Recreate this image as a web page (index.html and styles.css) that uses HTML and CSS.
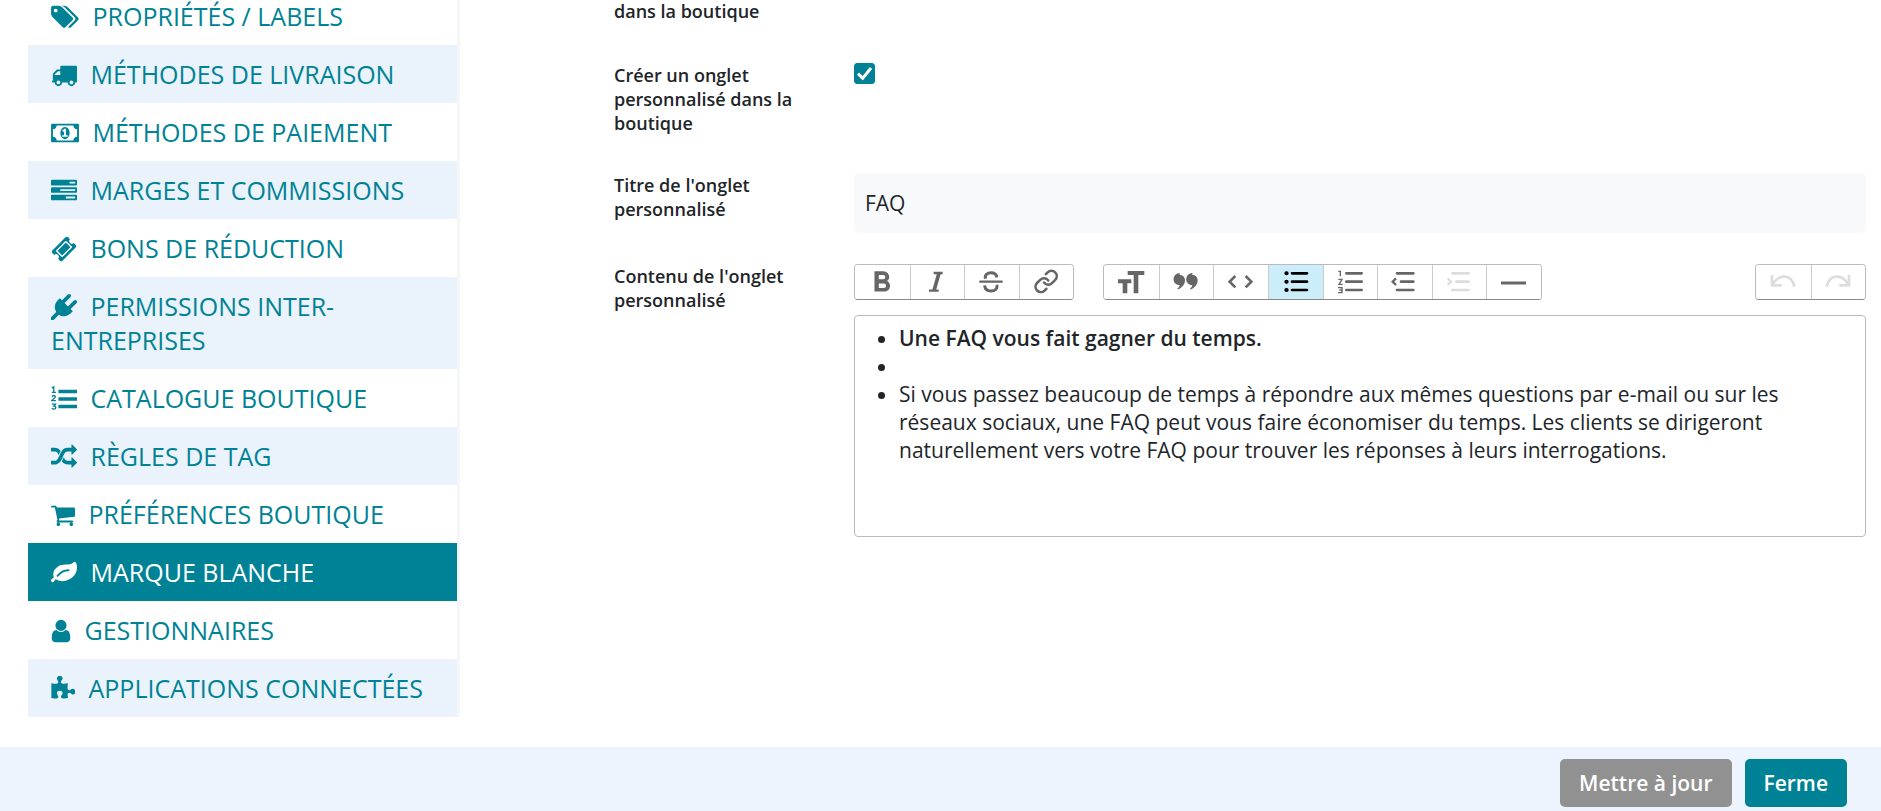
FILE: index.html
```html
<!DOCTYPE html>
<html lang="fr">
<head>
<meta charset="utf-8">
<meta name="viewport" content="width=device-width, initial-scale=1">
<title>Marque blanche</title>
<link rel="stylesheet" href="styles.css">
</head>
<body>
<div class="page">
  <main class="main">
    <nav class="sidebar" aria-label="Paramètres">
      <a class="item" href="#"><svg class="fa fa-wide" viewBox="0 0 1920 1792" aria-hidden="true"><path d="M448 448q0-53-37.5-90.5t-90.5-37.5-90.5 37.5-37.5 90.5 37.5 90.5 90.5 37.5 90.5-37.5 37.5-90.5zm1067 576q0 53-37 90l-491 492q-39 37-91 37-53 0-90-37l-715-716q-38-37-64.5-101t-26.5-117v-416q0-52 38-90t90-38h416q53 0 117 26.5t102 64.5l715 714q37 39 37 91zm384 0q0 53-37 90l-491 492q-39 37-91 37-36 0-59-14t-53-45l470-470q37-37 37-90 0-52-37-91l-715-714q-38-38-102-64.5t-117-26.5h224q53 0 117 26.5t102 64.5l715 714q37 39 37 91z"/></svg> PROPRIÉTÉS / LABELS</a>
      <a class="item" href="#"><svg class="fa" viewBox="0 0 1792 1792" aria-hidden="true"><path d="M640 1408q0-52-38-90t-90-38-90 38-38 90 38 90 90 38 90-38 38-90zm-384-512h384v-256h-158q-13 0-22 9l-195 195q-9 9-9 22v30zm1280 512q0-52-38-90t-90-38-90 38-38 90 38 90 90 38 90-38 38-90zm256-1088v1024q0 15-4 26.5t-13.5 18.5-16.5 11.5-23.5 6-22.5 2-25.5 0-22.5-.5q0 106-75 181t-181 75-181-75-75-181h-384q0 106-75 181t-181 75-181-75-75-181h-64q-3 0-22.5.5t-25.5 0-22.5-2-23.5-6-16.5-11.5-13.5-18.5-4-26.5q0-26 19-45t45-19v-320q0-8-.5-35t0-38 2.5-34.5 6.5-37 14-30.5 22.5-30l198-198q19-19 50.5-32t58.5-13h160v-192q0-26 19-45t45-19h1024q26 0 45 19t19 45z"/></svg> MÉTHODES DE LIVRAISON</a>
      <a class="item" href="#"><svg class="fa fa-wide" viewBox="0 0 1920 1792" aria-hidden="true"><path d="M768 1152h384v-96h-128v-448h-114l-148 137 77 80q42-37 55-57h2v288h-128v96zm512-256q0 70-21 142t-59.5 134-101.5 101-138 39-138-39-101.5-101-59.5-134-21-142 21-142 59.5-134 101.5-101 138-39 138 39 101.5 101 59.5 134 21 142zm512 256v-512q-106 0-181-75t-75-181h-1152q0 106-75 181t-181 75v512q106 0 181 75t75 181h1152q0-106 75-181t181-75zm128-832v1152q0 26-19 45t-45 19h-1792q-26 0-45-19t-19-45v-1152q0-26 19-45t45-19h1792q26 0 45 19t19 45z"/></svg> MÉTHODES DE PAIEMENT</a>
      <a class="item" href="#"><svg class="fa" viewBox="0 0 1792 1792" aria-hidden="true"><path d="M1024 1408h640v-128h-640v128zm-384-512h1024v-128h-1024v128zm640-512h384v-128h-384v128zm512 832v256q0 26-19 45t-45 19h-1664q-26 0-45-19t-19-45v-256q0-26 19-45t45-19h1664q26 0 45 19t19 45zm0-512v256q0 26-19 45t-45 19h-1664q-26 0-45-19t-19-45v-256q0-26 19-45t45-19h1664q26 0 45 19t19 45zm0-512v256q0 26-19 45t-45 19h-1664q-26 0-45-19t-19-45v-256q0-26 19-45t45-19h1664q26 0 45 19t19 45z"/></svg> MARGES ET COMMISSIONS</a>
      <a class="item" href="#"><svg class="fa" viewBox="0 0 1792 1792" aria-hidden="true"><path d="M1024 452l316 316-572 572-316-316zm-211 979l618-618q19-19 19-45t-19-45l-362-362q-18-18-45-18t-45 18l-618 618q-19 19-19 45t19 45l362 362q18 18 45 18t45-18zm889-637l-907 908q-37 37-90.5 37t-90.5-37l-126-126q56-56 56-136t-56-136-136-56-136 56l-125-126q-37-37-37-90.5t37-90.5l907-906q37-37 90.5-37t90.5 37l125 125q-56 56-56 136t56 136 136 56 136-56l126 125q37 37 37 90.5t-37 90.5z"/></svg> BONS DE RÉDUCTION</a>
      <a class="item" href="#"><svg class="fa" viewBox="0 0 1792 1792" aria-hidden="true"><path d="M1755 453q37 38 37 90.5t-37 90.5l-401 400 150 150-160 160q-163 163-389.5 186.5t-411.5-100.5l-362 362h-181v-181l362-362q-124-185-100.5-411.5t186.5-389.5l160-160 150 150 400-401q38-37 91-37t90 37 37 90.5-37 90.5l-400 401 234 234 401-400q38-37 91-37t90 37z"/></svg> PERMISSIONS INTER-ENTREPRISES</a>
      <a class="item" href="#"><svg class="fa" viewBox="0 0 1792 1792" aria-hidden="true"><path d="M512 256h1280v240h-1280zM512 776h1280v240h-1280zM512 1290h1280v240h-1280z"/><path class="digits" d="M60 130l130-70v370M50 440h290M60 720q90-80 180-60 90 40 40 130l-220 220h280M60 1250h250l-110 130q130-10 130 100 0 110-130 110-90 0-150-50"/></svg> CATALOGUE BOUTIQUE</a>
      <a class="item" href="#"><svg class="fa" viewBox="0 0 1792 1792" aria-hidden="true"><path d="M666 481q-60 92-137 273-22-45-37-72.5t-40.5-63.5-51-56.5-63-35-81.5-14.5h-224q-14 0-23-9t-9-23v-192q0-14 9-23t23-9h224q250 0 410 225zm1126 799q0 14-9 23l-320 320q-9 9-23 9-13 0-22.5-9.5t-9.5-22.5v-192q-32 0-85 .5t-81 1-73-1-71-5-64-10.5-63-18.5-58-28.5-59-40-55-53.5-56-69.5q59-93 136-273 22 45 37 72.5t40.5 63.5 51 56.5 63 35 81.5 14.5h256v-192q0-14 9-23t23-9q12 0 24 10l319 319q9 9 9 23zm0-896q0 14-9 23l-320 320q-9 9-23 9-13 0-22.5-9.5t-9.5-22.5v-192h-256q-48 0-87 15t-69 45-51 61.5-45 77.5q-32 62-78 171-29 66-49.5 111t-54 105-64 100-74 83-90 68.5-106.5 42-128 16.5h-224q-14 0-23-9t-9-23v-192q0-14 9-23t23-9h224q48 0 87-15t69-45 51-61.5 45-77.5q32-62 78-171 29-66 49.5-111t54-105 64-100 74-83 90-68.5 106.5-42 128-16.5h256v-192q0-14 9-23t23-9q12 0 24 10l319 319q9 9 9 23z"/></svg> RÈGLES DE TAG</a>
      <a class="item" href="#"><svg class="fa fa-cart" viewBox="64 0 1664 1792" aria-hidden="true"><path d="M704 1536q0 52-38 90t-90 38-90-38-38-90 38-90 90-38 90 38 38 90zm896 0q0 52-38 90t-90 38-90-38-38-90 38-90 90-38 90 38 38 90zm128-1088v512q0 24-16.5 42.5t-40.5 21.5l-1044 122q13 60 13 70 0 16-24 64h920q26 0 45 19t19 45-19 45-45 19h-1024q-26 0-45-19t-19-45q0-11 8-31.5t16-36 21.5-40 15.5-29.5l-177-823h-204q-26 0-45-19t-19-45 19-45 45-19h256q16 0 28.5 6.5t19.5 15.5 13 24.5 8 26 5.5 29.5 4.5 26h1201q26 0 45 19t19 45z"/></svg> PRÉFÉRENCES BOUTIQUE</a>
      <a class="item active" href="#" aria-current="page"><svg class="fa" viewBox="0 0 1792 1792" aria-hidden="true"><path d="M1280 704q0-26-19-45t-45-19q-172 0-318 49.5t-259.5 134-235.5 219.5q-19 21-19 45 0 26 19 45t45 19q24 0 45-19 27-24 74-71t67-66q137-124 268.5-176t313.5-52q26 0 45-19t19-45zm512-198q0 95-20 193-46 224-184.5 383t-357.5 268q-214 108-438 108-148 0-286-47-15-5-88-42t-96-37q-16 0-39.5 32t-45 70-52.5 70-60 32q-43 0-63.5-17.5t-45.5-59.5q-2-4-6-11t-5.5-10-3-9.5-1.5-13.5q0-35 31-73.5t68-65.5 68-56 31-48q0-4-14-38t-16-44q-9-51-9-104 0-115 43.5-220t119-184.5 170.5-139 204-95.5q55-18 145-25.5t179.5-9 178.5-6 163.5-24 113.5-56.5l29.5-29.5 29.5-28 27-20 36.5-16 43.5-4.5q39 0 70.5 46t47.5 112 24 124 8 96z"/></svg> MARQUE BLANCHE</a>
      <a class="item" href="#"><svg class="fa fa-narrow" viewBox="256 0 1280 1792" aria-hidden="true"><path d="M1536 1399q0 109-62.5 187t-150.5 78h-854q-88 0-150.5-78t-62.5-187q0-85 8.5-160.5t31.5-152 58.5-131 94-89 134.5-34.5q131 128 313 128t313-128q76 0 134.5 34.5t94 89 58.5 131 31.5 152 8.5 160.5zm-256-887q0 159-112.5 271.5t-271.5 112.5-271.5-112.5-112.5-271.5 112.5-271.5 271.5-112.5 271.5 112.5 112.5 271.5z"/></svg> GESTIONNAIRES</a>
      <a class="item" href="#"><svg class="fa fa-cart" viewBox="64 0 1664 1792" aria-hidden="true"><path d="M1755 1083q0 81-44.5 135t-123.5 54q-41 0-77.5-17.5t-59-38-56.5-38-71-17.5q-110 0-110 124 0 39 16 115t15 115v5q-22 0-33 1-34 3-97.5 11.5t-115.5 13.5-98 5q-61 0-103-26.5t-42-83.5q0-37 17.5-71t38-56.5 38-59 17.5-77.5q0-79-54-123.5t-135-44.5q-84 0-143 45.5t-59 127.5q0 43 15 83t33.5 64.5 33.5 53 15 50.5q0 45-46 89-37 35-117 35-95 0-245-24-9-2-27.5-4t-27.5-4l-13-2q-1 0-3-1-2 0-2-1v-1024q2 1 17.5 3.5t34 5 21.5 3.5q150 24 245 24 80 0 117-35 46-44 46-89 0-22-15-50.5t-33.5-53-33.5-64.5-15-83q0-82 59-127.5t144-45.5q80 0 134 44.5t54 123.5q0 41-17.5 77.5t-38 59-38 56.5-17.5 71q0 57 42 83.5t103 26.5q64 0 180-15t163-17v2q-1 2-3.5 17.5t-5 34-3.5 21.5q-24 150-24 245 0 80 35 117 44 46 89 46 22 0 50.5-15t53-33.5 64.5-33.5 83-15q82 0 127.5 59t45.5 143z"/></svg> APPLICATIONS CONNECTÉES</a>
    </nav>

    <form class="form" id="brand-form">
      <div class="row">
        <span class="label">dans la boutique</span>
      </div>
      <div class="row">
        <label class="label" for="custom-tab">Créer un onglet personnalisé dans la boutique</label>
        <div class="field"><input class="check" type="checkbox" id="custom-tab" checked></div>
      </div>
      <div class="row">
        <label class="label" for="tab-title">Titre de l'onglet personnalisé</label>
        <div class="field"><input class="text" type="text" id="tab-title" value="FAQ"></div>
      </div>
      <div class="row">
        <span class="label" id="content-label">Contenu de l'onglet personnalisé</span>
        <div class="field">
          <div class="toolbar" role="toolbar" aria-label="Mise en forme">
            <div class="group group-text">
              <button class="tool" type="button" aria-label="Gras"><svg viewBox="0 0 90 90"><path class="fill" transform="translate(-8 -9) scale(4.35)" d="M15.6 11.8c1-.7 1.6-1.8 1.6-2.8a4 4 0 0 0-4-4H7v14h7c2.1 0 3.7-1.7 3.7-3.8 0-1.5-.8-2.8-2.1-3.4zM10 7.5h3a1.5 1.5 0 1 1 0 3h-3v-3zm3.5 9H10v-3h3.5a1.5 1.5 0 1 1 0 3z"/></svg></button>
              <button class="tool" type="button" aria-label="Italique"><svg viewBox="0 0 90 90"><path d="M35 18h27M21 71h29" stroke-width="7"/><path d="M51 18L36 71" stroke-width="11"/></svg></button>
              <button class="tool" type="button" aria-label="Barré"><svg viewBox="0 0 90 90"><path d="M10 44h64" stroke-linecap="round" stroke-width="7"/><path d="M25 35C23 22 32 17 42 17C52 17 58 22 60 31M23 55C24 67 32 72 42 72C54 72 62 66 60 53" stroke-width="9"/></svg></button>
              <button class="tool" type="button" aria-label="Lien"><svg viewBox="0 0 90 90"><g transform="translate(7 5) scale(3.2)" stroke-width="2.4" stroke-linecap="round"><path d="M10 13a5 5 0 0 0 7.54.54l3-3a5 5 0 0 0-7.07-7.07l-1.72 1.71"/><path d="M14 11a5 5 0 0 0-7.54-.54l-3 3a5 5 0 0 0 7.07 7.07l1.71-1.71"/></g></svg></button>
            </div>
            <div class="group group-block">
              <button class="tool" type="button" aria-label="Titre"><svg viewBox="0 0 90 90"><path class="fill" d="M35 12h50v12H67v55H53V24H35zM6 37h40v12H34v30H20V49H6z"/></svg></button>
              <button class="tool" type="button" aria-label="Citation"><svg viewBox="0 0 90 90"><path class="fill" d="M26 24a15 15 0 0 1 16 16c0 12-9 23-20 27-2 1-3-2-2-3 4-3 6-6 6-9a15 15 0 0 1 0-37zM64 24a15 15 0 0 1 16 16c0 12-9 23-20 27-2 1-3-2-2-3 4-3 6-6 6-9a15 15 0 0 1 0-37z"/></svg></button>
              <button class="tool" type="button" aria-label="Code"><svg viewBox="0 0 90 90"><path d="M28 27L11 44l17 17M59 27l17 17-17 17" stroke-width="8"/></svg></button>
              <button class="tool on" type="button" aria-label="Puces" aria-pressed="true"><svg viewBox="0 0 90 90"><path d="M33 19h45M33 44h45M33 69h45" stroke-width="8" stroke-linecap="round"/><path d="M16 19h1M16 44h1M16 69h1" stroke-width="12" stroke-linecap="round"/></svg></button>
              <button class="tool" type="button" aria-label="Numéros"><svg viewBox="0 0 90 90"><path d="M34 19h46M34 44h46M34 69h46" stroke-width="8" stroke-linecap="round"/><path d="M10 13h6v15M10 37h11l-9 15h11M9 62h12v15H9M13 69h8" stroke-width="4"/></svg></button>
              <button class="tool" type="button" aria-label="Réduire le niveau"><svg viewBox="0 0 90 90"><path d="M21 19h49M33 44h37M21 69h49" stroke-width="8" stroke-linecap="round"/><path d="M18 34L8 44l10 10" stroke-width="7"/></svg></button>
              <button class="tool" type="button" aria-label="Augmenter le niveau" disabled><svg viewBox="0 0 90 90"><path d="M22 19h49M34 44h37M22 69h49" stroke-width="8" stroke-linecap="round"/><path d="M8 34l10 10L8 54" stroke-width="7"/></svg></button>
              <button class="tool" type="button" aria-label="Séparateur"><svg viewBox="0 0 90 90"><path d="M6 48h75" stroke-width="9"/></svg></button>
            </div>
            <div class="group group-history">
              <button class="tool" type="button" aria-label="Annuler" disabled><svg viewBox="0 0 90 90"><path d="M12 24v31h29M14 53C30 22 70 18 79 59" stroke-width="8"/></svg></button>
              <button class="tool" type="button" aria-label="Rétablir" disabled><svg viewBox="0 0 90 90"><path d="M78 24v31H49M76 53C60 22 20 18 11 59" stroke-width="8"/></svg></button>
            </div>
          </div>
          <div class="editor" contenteditable="true" role="textbox" aria-multiline="true" aria-labelledby="content-label" spellcheck="false"><ul class="list"><li><strong>Une FAQ vous fait gagner du temps.</strong></li><li><br></li><li>Si vous passez beaucoup de temps à répondre aux mêmes questions par e-mail ou sur les réseaux sociaux, une FAQ peut vous faire économiser du temps. Les clients se dirigeront naturellement vers votre FAQ pour trouver les réponses à leurs interrogations.</li></ul></div>
        </div>
      </div>
    </form>
  </main>
  <footer class="footer">
    <button class="btn btn-muted" type="submit" form="brand-form">Mettre à jour</button>
    <button class="btn btn-primary" type="button">Ferme</button>
  </footer>
</div>
</body>
</html>
```
FILE: styles.css
```css
* { box-sizing: border-box; }

body {
  margin: 0;
  background: #fff;
  color: #212529;
  font-family: "Open Sans", "Noto Sans", sans-serif;
  font-size: 21px;
  line-height: 28px;
}

.page {
  display: flex;
  flex-direction: column;
  min-height: 100vh;
  overflow: hidden;
}

.main {
  display: flex;
  flex: 1;
  align-items: flex-start;
  gap: 154px;
  margin-top: -13px;
  padding: 0 15px 30px 28px;
}

/* Sidebar */
.sidebar {
  display: flex;
  flex-direction: column;
  flex: 0 0 432px;
  border-right: 3px solid #f5f6f7;
}

.item {
  padding: 12px 23px;
  color: #008296;
  font-size: 25px;
  line-height: 34px;
  text-decoration: none;
}

.item:nth-child(even) { background: #eaf3fb; }
.item.active { background: #008296; color: #fff; }

.fa {
  width: 26px;
  height: 26px;
  margin-right: 7px;
  vertical-align: -4px;
  fill: currentColor;
}

.fa-wide { width: 28px; }
.fa-cart { width: 24px; }
.fa-narrow { width: 20px; }
.digits { fill: none; stroke: currentColor; stroke-width: 90; }

/* Form */
.form {
  display: flex;
  flex: 1;
  flex-direction: column;
  gap: 31px;
  min-width: 0;
  padding-top: 12px;
}

.row {
  display: grid;
  grid-template-columns: 210px minmax(0, 1fr);
  column-gap: 30px;
  align-items: start;
  min-height: 33px;
}

.label {
  padding-bottom: 7px;
  font-size: 18px;
  font-weight: 600;
  line-height: 24px;
}

.check {
  display: block;
  appearance: none;
  width: 21px;
  height: 21px;
  margin: 0;
  border-radius: 3px;
  background: #fff;
  border: 1px solid #008296;
}

.check:checked {
  background: #008296 url("data:image/svg+xml,%3Csvg xmlns='http://www.w3.org/2000/svg' viewBox='0 0 63 63'%3E%3Cpath d='M12 32l14 14L51 15' fill='none' stroke='%23fff' stroke-width='9'/%3E%3C/svg%3E") center / 21px 21px;
}

.text {
  display: block;
  width: 100%;
  height: 60px;
  padding: 0 11px;
  border: 0;
  border-radius: 5px;
  background: #f8f9fb;
  color: #212529;
  font: inherit;
}

/* Rich text toolbar */
.toolbar {
  display: flex;
  margin-bottom: 15px;
}

.group {
  display: grid;
  grid-auto-flow: column;
  grid-auto-columns: 1fr;
  border: 1px solid #bbb;
  border-bottom-color: #888;
  border-radius: 4px;
  overflow: hidden;
}

.group-text { width: 220px; margin-right: 29px; }
.group-block { width: 439px; }
.group-history { width: 111px; margin-left: auto; }

.tool {
  display: flex;
  align-items: center;
  justify-content: center;
  height: 34px;
  padding: 0;
  border: 0;
  border-left: 1px solid #ccc;
  background: #fff;
  color: #666;
}

.tool:first-child { border-left: 0; }
.tool.on { background: #cbeefa; color: #000; }
.tool:disabled { color: #ddd; }

.tool svg {
  width: 30px;
  height: 30px;
  fill: none;
  stroke: currentColor;
}

.tool .fill { fill: currentColor; stroke: none; }

.editor {
  min-height: 222px;
  padding: 8px 12px;
  border: 1px solid #bbb;
  border-radius: 4px;
}

.list { margin: 0; padding-left: 32px; }
.list strong { font-weight: 600; }

/* Footer */
.footer {
  display: flex;
  justify-content: flex-end;
  gap: 13px;
  padding: 12px 34px 4px;
  background: #edf4fd;
}

.btn {
  height: 48px;
  padding: 0 19px;
  border: 0;
  border-radius: 5px;
  color: #fff;
  font: inherit;
  font-weight: 600;
}

.btn-muted { background: #919191; }
.btn-primary { background: #008296; }
```
